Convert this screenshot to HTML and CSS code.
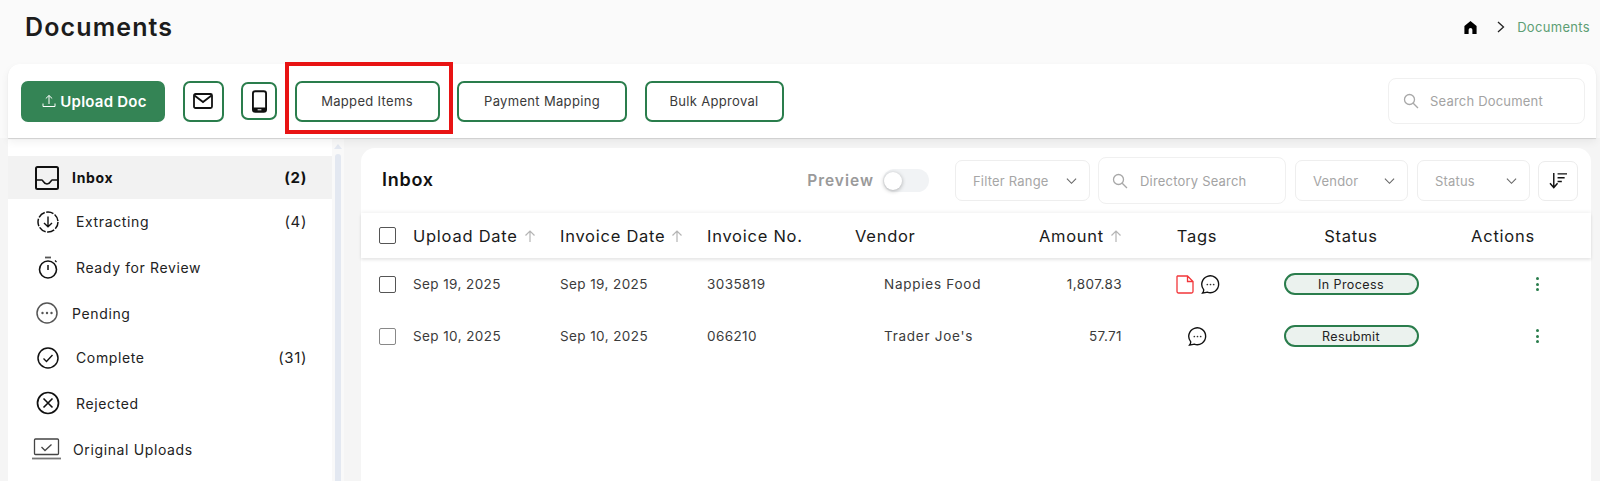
FILE: index.html
```html
<!DOCTYPE html>
<html lang="en">
<head>
<meta charset="utf-8">
<title>Documents</title>
<link rel="stylesheet" href="styles.css">
</head>
<body>
<header class="topbar">
  <h1 class="title">Documents</h1>
  <nav class="crumbs">
    <svg class="crumb-home" viewBox="0 0 16 16"><path d="M8 1 1.500 6.500V15H6V10.500a2 2 0 0 1 4 0V15h4.500V6.500Z" fill="#000"/></svg>
    <svg class="crumb-sep" viewBox="0 0 10 14"><path d="M2 2l5.500 5L2 12" fill="none" stroke="#222" stroke-width="1.300"/></svg>
    <span class="crumb-text">Documents</span>
  </nav>
</header>

<section class="toolbar">
  <button class="btn btn-primary">
    <svg class="up-icon" viewBox="0 0 14 14"><path d="M7 10V1.500M3.800 4.500 7 1.500l3.200 3M1 9.500V12.500H13V9.500" fill="none" stroke="#fff" stroke-width="1"/></svg>
    Upload Doc
  </button>
  <button class="btn btn-mail">
    <svg class="mail-icon" viewBox="0 0 20 16"><rect x="1" y="1" width="18" height="14" rx="1.500" fill="none" stroke="#111" stroke-width="1.800"/><path d="M1.500 2.500 10 9l8.500-6.500" fill="none" stroke="#111" stroke-width="1.800"/></svg>
  </button>
  <button class="btn btn-phone">
    <svg class="phone-icon" viewBox="0 0 16 24"><rect x="1" y="1" width="14" height="22" rx="2.500" fill="none" stroke="#111" stroke-width="2"/><path d="M1 18.500h14V21a2 2 0 0 1-2 2H3a2 2 0 0 1-2-2Z" fill="#111"/><rect x="6" y="20" width="4" height="1.500" fill="#bbb"/></svg>
  </button>
  <div class="highlighted">
    <button class="btn btn-mapped">Mapped Items</button>
    <span class="red-box"></span>
  </div>
  <button class="btn btn-payment">Payment Mapping</button>
  <button class="btn btn-bulk">Bulk Approval</button>
  <div class="search search-doc">
    <svg class="search-icon" viewBox="0 0 16 16"><circle cx="6.500" cy="6.500" r="5" fill="none" stroke="#a8a8a8" stroke-width="1.300"/><path d="M10.200 10.200 15 15" stroke="#a8a8a8" stroke-width="1.300"/></svg>
    <span>Search Document</span>
  </div>
</section>

<div class="content">
  <aside class="sidebar">
    <ul class="menu">
      <li class="item item-active">
        <span class="cell"><svg class="ic-inbox" viewBox="0 0 24 24"><rect x="1" y="1" width="22" height="22" rx="1.500" fill="none" stroke="#111" stroke-width="2"/><path d="M1 14h6c1 0 1.500 4 5 4s4-4 5-4h6" fill="none" stroke="#111" stroke-width="1.700"/></svg></span>
        <span class="label">Inbox</span><span class="count">(2)</span>
      </li>
      <li class="item item-wide">
        <span class="cell"><svg class="ic" viewBox="0 0 24 24"><circle cx="12" cy="12" r="10" fill="none" stroke="#111" stroke-width="1.500" stroke-dasharray="7.500 1.500" /><path d="M12 6.500V16.500M8 13l4 3.800 4-3.800" fill="none" stroke="#111" stroke-width="1.400"/></svg></span>
        <span class="label">Extracting</span><span class="count">(4)</span>
      </li>
      <li class="item item-wide item-tall">
        <span class="cell"><svg class="ic" viewBox="0 0 24 24"><circle cx="12" cy="13.500" r="8.500" fill="none" stroke="#111" stroke-width="1.600"/><path d="M9 1.500h6" stroke="#555" stroke-width="1.800"/><path d="M12 9v5" stroke="#111" stroke-width="1.500"/><path d="M19 4.500l1.500 1.500" stroke="#111" stroke-width="1.300"/></svg></span>
        <span class="label">Ready for Review</span>
      </li>
      <li class="item item-short">
        <span class="cell"><svg class="ic" viewBox="0 0 24 24"><circle cx="12" cy="12" r="10" fill="none" stroke="#555" stroke-width="1.500"/><circle cx="7.500" cy="12" r="1.200" fill="#555"/><circle cx="12" cy="12" r="1.200" fill="#555"/><circle cx="16.500" cy="12" r="1.200" fill="#555"/></svg></span>
        <span class="label">Pending</span>
      </li>
      <li class="item item-wide">
        <span class="cell"><svg class="ic" viewBox="0 0 24 24"><circle cx="12" cy="12" r="10" fill="none" stroke="#111" stroke-width="1.500"/><path d="M7.500 12.500l3 3 6-6.500" fill="none" stroke="#111" stroke-width="1.400"/></svg></span>
        <span class="label">Complete</span><span class="count">(31)</span>
      </li>
      <li class="item item-wide item-gap">
        <span class="cell"><svg class="ic" viewBox="0 0 24 24"><circle cx="12" cy="12" r="10.500" fill="none" stroke="#111" stroke-width="1.700"/><path d="M7.500 7.500l9 9M16.500 7.500l-9 9" stroke="#111" stroke-width="1.600"/></svg></span>
        <span class="label">Rejected</span>
      </li>
      <li class="item item-gap">
        <span class="cell"><svg class="ic-laptop" viewBox="0 0 29 22"><rect x="2.500" y="1" width="24" height="15.500" rx="1" fill="none" stroke="#444" stroke-width="1.300"/><path d="M9.500 9l3.500 3.500 6.500-6" fill="none" stroke="#444" stroke-width="1.300"/><path d="M0 20.500h29" stroke="#777" stroke-width="1.800"/></svg></span>
        <span class="label label-tight">Original Uploads</span>
      </li>
    </ul>
  </aside>
  <div class="scroller">
    <svg class="scroll-up" viewBox="0 0 8 5"><path d="M4 0l4 5H0Z" fill="#e3e8f1"/></svg>
    <div class="scroll-thumb"></div>
  </div>

  <main class="panel">
    <div class="panel-head">
      <h2 class="panel-title">Inbox</h2>
      <span class="preview">Preview</span>
      <span class="toggle"><span class="knob"></span></span>
      <div class="select sel-range"><span>Filter Range</span><svg class="chev" viewBox="0 0 12 8"><path d="M1 1.500l5 5 5-5" fill="none" stroke="#666" stroke-width="1.200"/></svg></div>
      <div class="search search-dir">
        <svg class="search-icon" viewBox="0 0 16 16"><circle cx="6.500" cy="6.500" r="5" fill="none" stroke="#a8a8a8" stroke-width="1.300"/><path d="M10.200 10.200 15 15" stroke="#a8a8a8" stroke-width="1.300"/></svg>
        <span>Directory Search</span>
      </div>
      <div class="select sel-short"><span>Vendor</span><svg class="chev" viewBox="0 0 12 8"><path d="M1 1.500l5 5 5-5" fill="none" stroke="#666" stroke-width="1.200"/></svg></div>
      <div class="select sel-short sel-last"><span>Status</span><svg class="chev" viewBox="0 0 12 8"><path d="M1 1.500l5 5 5-5" fill="none" stroke="#666" stroke-width="1.200"/></svg></div>
      <button class="sort-btn"><svg class="sort-icon" viewBox="0 0 20 18"><path d="M5 1v15M1 12l4 4.500L9 12" fill="none" stroke="#111" stroke-width="1.500"/><path d="M9 2h10M9 6h7.500M9 10h4.500" stroke="#111" stroke-width="1.500"/></svg></button>
    </div>

    <div class="row row-head">
      <span class="check"></span>
      <span class="th">Upload Date<svg class="arrow" viewBox="0 0 12 12"><path d="M6 12V1M1.500 5.500 6 1l4.500 4.500" fill="none" stroke="#b5b5b5" stroke-width="1.200"/></svg></span>
      <span class="th">Invoice Date<svg class="arrow" viewBox="0 0 12 12"><path d="M6 12V1M1.500 5.500 6 1l4.500 4.500" fill="none" stroke="#b5b5b5" stroke-width="1.200"/></svg></span>
      <span class="th">Invoice No.</span>
      <span class="th">Vendor</span>
      <span class="th th-right">Amount<svg class="arrow" viewBox="0 0 12 12"><path d="M6 12V1M1.500 5.500 6 1l4.500 4.500" fill="none" stroke="#b5b5b5" stroke-width="1.200"/></svg></span>
      <span class="th th-center">Tags</span>
      <span class="th th-center">Status</span>
      <span class="th th-center">Actions</span>
    </div>

    <div class="row row-body">
      <span class="check"></span>
      <span>Sep 19, 2025</span>
      <span>Sep 19, 2025</span>
      <span>3035819</span>
      <span class="vendor">Nappies Food</span>
      <span class="amount">1,807.83</span>
      <span class="tags">
        <svg class="ic-file" viewBox="0 0 18 19"><path d="M1.500 1H11.500L17 6.500V16.500a1.500 1.500 0 0 1-1.500 1.500H2.500A1.500 1.500 0 0 1 1 16.500V1.500ZM11.500 1V6.500H17" fill="none" stroke="#f2363a" stroke-width="1.300"/></svg>
        <svg class="ic-chat" viewBox="0 0 18 18"><path d="M1.500 17c.8-1 1.200-2 1-3.200A8 8 0 1 1 6 16.300C4.500 16.800 3 17 1.500 17Z" fill="none" stroke="#111" stroke-width="1.300"/><circle cx="6" cy="9" r=".8" fill="#333"/><circle cx="9" cy="9" r=".8" fill="#333"/><circle cx="12" cy="9" r=".8" fill="#333"/></svg>
      </span>
      <span class="status-cell"><span class="pill">In Process</span></span>
      <span class="dots"><i></i><i></i><i></i></span>
    </div>
    <div class="row row-body">
      <span class="check check-light"></span>
      <span>Sep 10, 2025</span>
      <span>Sep 10, 2025</span>
      <span>066210</span>
      <span class="vendor">Trader Joe's</span>
      <span class="amount">57.71</span>
      <span class="tags">
        <svg class="ic-chat" viewBox="0 0 18 18"><path d="M1.500 17c.8-1 1.200-2 1-3.200A8 8 0 1 1 6 16.300C4.500 16.800 3 17 1.500 17Z" fill="none" stroke="#111" stroke-width="1.300"/><circle cx="6" cy="9" r=".8" fill="#333"/><circle cx="9" cy="9" r=".8" fill="#333"/><circle cx="12" cy="9" r=".8" fill="#333"/></svg>
      </span>
      <span class="status-cell"><span class="pill">Resubmit</span></span>
      <span class="dots"><i></i><i></i><i></i></span>
    </div>
  </main>
</div>
</body>
</html>
```
FILE: styles.css
```css
* { box-sizing: border-box; }
html, body { margin: 0; height: 481px; overflow: hidden; }
body {
  background: #fafafa;
  font-family: Inter, "Liberation Sans", sans-serif;
  color: #222;
}
svg { display: block; flex: none; }
button { font-family: inherit; padding: 0; background: #fff; cursor: pointer; }
h1, h2, ul { margin: 0; padding: 0; }

.topbar {
  height: 64px;
  display: flex;
  justify-content: space-between;
  align-items: center;
  padding: 0 10px 10px 25px;
}
.title { font-size: 25px; font-weight: 600; color: #1c1c1c; letter-spacing: 0.045em; }
.crumbs { display: flex; align-items: center; }
.crumb-home { width: 15px; height: 15px; margin-right: 18px; }
.crumb-sep { width: 10px; height: 14px; margin-right: 11px; }
.crumb-text { font-size: 13px; color: #5c9e74; letter-spacing: 0.025em; }

.toolbar {
  margin-left: 8px;
  margin-right: 4px;
  height: 74px;
  background: #fff;
  border-radius: 12px 12px 0 0;
  display: flex;
  align-items: center;
  gap: 17.5px;
  padding: 0 11px 0 13px;
  box-shadow: 0 1px 1px #cfcfcf, 0 4px 8px rgba(0,0,0,.06);
  position: relative;
  z-index: 2;
}
.btn {
  height: 41px;
  border: 2px solid #2a7d4c;
  border-radius: 7px;
  font-size: 13px;
  color: #3a3a3a;
  display: flex;
  align-items: center;
  justify-content: center;
  letter-spacing: 0.025em;
}
.btn-primary {
  width: 144px;
  padding-left: 3px;
  background: #348455;
  border-color: #348455;
  color: #fff;
  font-size: 15px;
  font-weight: 600;
  letter-spacing: 0.015em;
  gap: 4px;
}
.up-icon { width: 14px; height: 14px; }
.btn-mail { width: 41px; }
.mail-icon { width: 20px; height: 16px; }
.btn-phone { width: 36px; height: 38px; }
.phone-icon { width: 15px; height: 23px; }
.highlighted { position: relative; }
.btn-mapped { width: 145px; }
.btn-payment { width: 170px; }
.btn-bulk { width: 139px; }
.red-box {
  position: absolute;
  left: -10px;
  right: -13px;
  top: -19px;
  bottom: -12px;
  border: 4px solid #e81313;
  pointer-events: none;
}
.search {
  display: flex;
  align-items: center;
  border: 1px solid #f0f0f0;
  border-radius: 8px;
  background: #fff;
  font-size: 13px;
  color: #a3a3a3;
  letter-spacing: 0.015em;
}
.search-doc {
  margin-left: auto;
  width: 197px;
  height: 46px;
  padding-left: 14px;
  gap: 11px;
}
.search-icon { width: 16px; height: 16px; }

.content { display: flex; height: 343px; background: #f5f5f5; }
.sidebar { margin-left: 8px; width: 324px; background: #fff; padding-top: 18px; }
.menu { list-style: none; }
.item {
  height: 45px;
  display: flex;
  align-items: center;
  padding-left: 24px;
  padding-right: 25px;
  font-size: 14px;
  letter-spacing: 0.045em;
  color: #222;
}
.item-active { height: 43px; background: #f2f2f2; font-weight: 700; color: #111; letter-spacing: 0.05em; }
.item-gap { height: 46px; }
.item-tall { height: 47px; }
.item-short { height: 44px; }
.cell { width: 40px; display: flex; justify-content: flex-start; padding-left: 3px; flex: none; }
.item-wide .cell { width: 44px; padding-left: 4px; }
.ic { width: 24px; height: 24px; }
.ic-inbox { width: 24px; height: 24px; }
.ic-laptop { width: 29px; height: 22px; margin-left: -3px; }
.label-tight { margin-left: 1px; }
.count { margin-left: auto; font-size: 15px; }

.scroller { width: 12px; background: #f9f9f9; display: flex; flex-direction: column; align-items: center; padding-top: 6px; }
.scroll-up { width: 8px; height: 5px; margin-bottom: 5px; }
.scroll-thumb { width: 6px; flex: 1; background: #e3e8f1; border-radius: 3px 3px 0 0; }

.panel {
  margin-left: 17px;
  margin-top: 10px;
  width: 1230px;
  background: #fff;
  border-radius: 14px 14px 0 0;
  font-size: 13.500px;
}
.panel-head {
  height: 65px;
  display: flex;
  align-items: center;
  padding: 0 13px 0 21px;
}
.panel-title { font-size: 18px; font-weight: 600; color: #111; letter-spacing: 0.04em; margin-top: -2px; }
.preview { margin-left: auto; font-size: 15.500px; font-weight: 600; color: #9a9a9a; letter-spacing: 0.065em; }
.toggle {
  width: 46px; height: 23px; margin-left: 9px; margin-right: 26px;
  background: #f1f3f5; border-radius: 12px; display: flex; align-items: center;
}
.knob { width: 18px; height: 18px; margin-left: 1px; border-radius: 50%; background: #fff; box-shadow: 0 1px 4px rgba(0,0,0,.3); }
.select {
  height: 41px;
  border: 1px solid #eeeeee;
  border-radius: 7px;
  display: flex;
  align-items: center;
  justify-content: space-between;
  font-size: 13px;
  color: #a6a6a6;
  letter-spacing: 0.015em;
  padding: 0 12px 0 17px;
}
.sel-range { width: 135px; margin-right: 8px; }
.sel-short { width: 113px; margin-right: 9px; }
.sel-last { margin-right: 8px; }
.search-dir { width: 188px; height: 47px; padding-left: 13px; gap: 12px; margin-right: 9px; }
.chev { width: 11px; height: 8px; }
.sort-btn {
  width: 40px; height: 40px;
  border: 1px solid #ececec;
  border-radius: 7px;
  display: flex; align-items: center; justify-content: center;
}
.sort-icon { width: 19px; height: 17px; }

.row {
  display: grid;
  grid-template-columns: 34px 147px 147px 148px 148px 119px 150px 158px 146px;
  padding: 0 15px 0 18px;
  align-items: center;
}
.row-head {
  height: 45px;
  box-shadow: 0 -2px 3px rgba(0,0,0,.04), 0 2px 3px rgba(0,0,0,.1);
  font-size: 16.500px;
  color: #1a1a1a;
  letter-spacing: 0.045em;
  position: relative;
}
.th { display: flex; align-items: center; gap: 6px; }
.th-right { justify-content: flex-end; }
.th-center { justify-content: center; }
.arrow { width: 12px; height: 12px; }
.check {
  width: 17px; height: 17px;
  border: 1px solid #555;
  border-radius: 2px;
  background: #fff;
}
.check-light { border-color: #888; }
.row-body { height: 52px; color: #3b3b3b; letter-spacing: 0.03em; }
.vendor { padding-left: 29px; letter-spacing: 0.055em; }
.amount { text-align: right; }
.tags { display: flex; justify-content: center; align-items: center; gap: 7px; padding-left: 1px; }
.ic-file { width: 18px; height: 19px; }
.ic-chat { width: 19px; height: 19px; }
.status-cell { display: flex; justify-content: center; }
.pill {
  width: 135px; height: 22px;
  border: 2px solid #2a7d4c;
  border-radius: 11px;
  background: #ebf2ee;
  font-size: 12.500px;
  color: #222;
  display: flex; align-items: center; justify-content: center;
}
.dots { display: flex; flex-direction: column; align-items: flex-end; gap: 2.500px; padding-right: 37px; }
.dots i { width: 3px; height: 3px; border-radius: 50%; background: #2a7d4c; }
```
